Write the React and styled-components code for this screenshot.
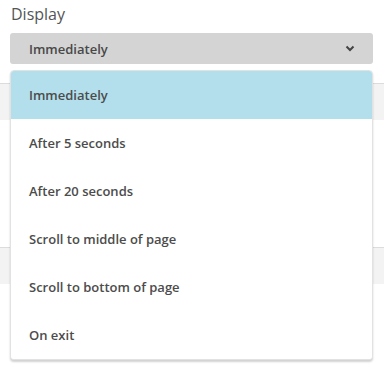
import React from 'react';
import styled, { createGlobalStyle } from 'styled-components';

const GlobalStyle = createGlobalStyle`
    body {
        margin: 0;
        background: #ffffff;
        font-family: "Open Sans", "Liberation Sans", sans-serif;
    }
`;

const Page = styled.div`
    position: relative;
    width: 384px;
    height: 369px;
    overflow: hidden;
`;

const Field = styled.div`
    padding: 0 11px 0 10px;
`;

const Label = styled.div`
    font-size: 16px;
    line-height: 24px;
    color: #555;
    padding: 2px 0 0 1px;
    height: 31px;
    box-sizing: border-box;
`;

const Select = styled.div`
    display: flex;
    align-items: center;
    justify-content: space-between;
    height: 31px;
    margin-top: 2px;
    padding: 0 18px 0 19px;
    background: #d4d4d4;
    border-radius: 3px;
    font-size: 13px;
    font-weight: 600;
    color: #484848;
`;

const Band = styled.div`
    height: 36px;
    margin-top: ${p => p.$top}px;
    background: #f3f3f3;
    border-top: 1px solid #dcdcdc;
`;

const Menu = styled.ul`
    position: absolute;
    top: 70px;
    left: 10px;
    width: 363px;
    margin: 0;
    padding: 0;
    list-style: none;
    background: #fff;
    border: 1px solid #e2e2e2;
    border-radius: 4px;
    box-shadow: 0 2px 2px rgba(0, 0, 0, 0.18);
    box-sizing: border-box;
    overflow: hidden;
`;

const Item = styled.li`
    height: 48px;
    display: flex;
    align-items: center;
    padding-left: 18px;
    font-size: 13px;
    font-weight: 600;
    color: #4c4c4c;
    background: ${p => (p.$active ? '#b2dfeb' : '#fff')};
`;

const Chevron = () => (
    <svg width="10" height="7" viewBox="0 0 10 7">
        <path d="M1.5 1.5 L5 5 L8.5 1.5" fill="none" stroke="#444" strokeWidth="2" />
    </svg>
);

const options = [
    'Immediately',
    'After 5 seconds',
    'After 20 seconds',
    'Scroll to middle of page',
    'Scroll to bottom of page',
    'On exit',
];

const App = () => (
    <Page>
        <GlobalStyle />
        <Field>
            <Label>Display</Label>
            <Select>
                <span>Immediately</span>
                <Chevron />
            </Select>
        </Field>
        <Band $top={19} />
        <Band $top={127} />
        <Menu>
            {options.map((o, i) => (
                <Item key={o} $active={i === 0}>{o}</Item>
            ))}
        </Menu>
    </Page>
);

export default App;
